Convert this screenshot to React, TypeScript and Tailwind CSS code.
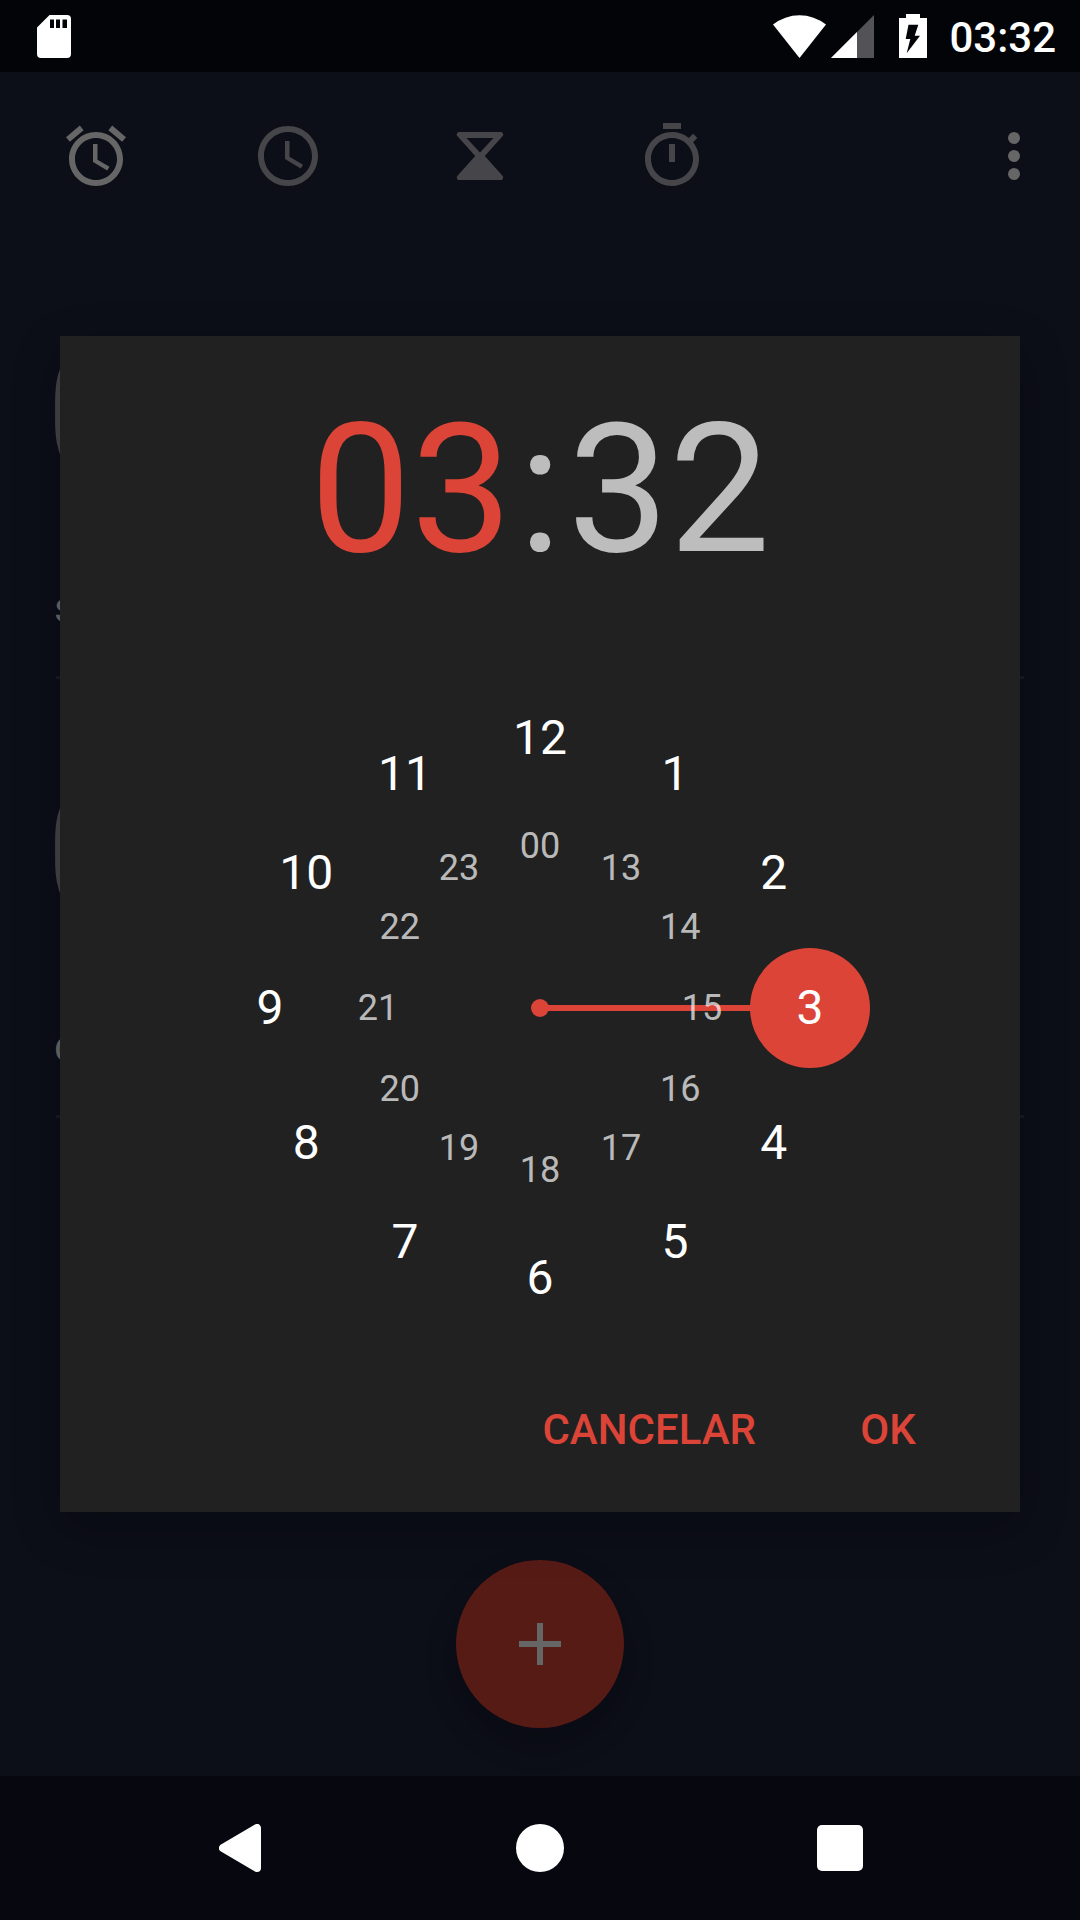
import { useState } from "react";
import type { ReactNode } from "react";

const TABS = [
  {
    label: "Alarme",
    path: "M22 5.72l-4.6-3.86-1.29 1.53 4.6 3.86L22 5.72zM7.88 3.39L6.6 1.86 2 5.71l1.29 1.53 4.59-3.85zM12.5 8H11v6l4.75 2.85.75-1.23-4-2.37V8zM12 4c-4.97 0-9 4.03-9 9s4.02 9 9 9c4.97 0 9-4.03 9-9s-4.03-9-9-9zm0 16c-3.87 0-7-3.13-7-7s3.13-7 7-7 7 3.13 7 7-3.13 7-7 7z",
  },
  {
    label: "Relógio",
    path: "M11.99 2C6.47 2 2 6.48 2 12s4.47 10 9.99 10C17.52 22 22 17.52 22 12S17.52 2 11.99 2zM12 20c-4.42 0-8-3.58-8-8s3.58-8 8-8 8 3.58 8 8-3.58 8-8 8zM12.5 7H11v6l5.25 3.15.75-1.23-4.5-2.67z",
  },
  {
    label: "Timer",
    path: "M5.2 4h13.6c.9 0 1.2.9.7 1.45L13.6 12l5.9 6.55c.5.55.2 1.45-.7 1.45H5.2c-.9 0-1.2-.9-.7-1.45L10.4 12 4.5 5.450C4 4.900 4.300 4 5.200 4zM7.500 6 12 10.800 16.500 6z",
  },
  {
    label: "Cronômetro",
    path: "M15 1H9v2h6V1zm-4 13h2V8h-2v6zm8.03-6.61l1.42-1.42c-.43-.51-.9-.99-1.41-1.41l-1.42 1.42A8.962 8.962 0 0 0 12 4c-4.97 0-9 4.03-9 9s4.02 9 9 9a8.994 8.994 0 0 0 7.03-14.61zM12 20c-3.87 0-7-3.13-7-7s3.13-7 7-7 7 3.13 7 7-3.13 7-7 7z",
  },
];

const OUTER = ["12", "1", "2", "3", "4", "5", "6", "7", "8", "9", "10", "11"];
const INNER = ["00", "13", "14", "15", "16", "17", "18", "19", "20", "21", "22", "23"];

// The dial is drawn in a 648-unit square.
const DIAL = 648;
const OUTER_RADIUS = 270;
const INNER_RADIUS = 162;

function dialPoint(index: number, radius: number) {
  const angle = (index * Math.PI) / 6;
  return {
    x: DIAL / 2 + radius * Math.sin(angle),
    y: DIAL / 2 - radius * Math.cos(angle),
  };
}

function StatusBar() {
  return (
    <header className="flex h-[72px] shrink-0 items-center justify-between bg-[#030408] pr-6 pl-[37px] text-white">
      <svg width="34" height="43" viewBox="0 0 34 43" aria-label="Cartão SD">
        <path
          fill="currentColor"
          fillRule="evenodd"
          d="M12.5 0H30a4 4 0 0 1 4 4v35a4 4 0 0 1-4 4H4a4 4 0 0 1-4-4V12.500zM13 4.500v8.500h4V4.500zM19 4.500v8.500h4V4.500zM25.500 4.500v8.500h4.500V4.500z"
        />
      </svg>
      <div className="flex items-center">
        <svg width="53" height="43" viewBox="0 0 53 43" aria-label="Wi-Fi">
          <path fill="currentColor" d="M26.5 43 0 9.500A43 43 0 0 1 53 9.500z" />
        </svg>
        <svg className="ml-[5px]" width="43" height="43" viewBox="0 0 43 43" aria-label="Sinal">
          <path fill="#535257" d="M43 0v43H0z" />
          <path fill="currentColor" d="M26 17v26H0z" />
        </svg>
        <svg className="ml-[25px]" width="28" height="44" viewBox="0 0 28 44" aria-label="Bateria carregando">
          <path
            fill="currentColor"
            fillRule="evenodd"
            d="M7 0h14v4h7v40H0V4h7zM9.500 10.700 6.700 25h4.600L7.700 39.300 21 21.700h-5.300l3.600-11z"
          />
        </svg>
        <time className="ml-[22px] pt-1 text-[42px] leading-[48px] font-medium">03:32</time>
      </div>
    </header>
  );
}

function Toolbar() {
  return (
    <nav className="flex h-[168px] shrink-0 items-center pr-[30px]">
      {TABS.map((tab, i) => (
        <button
          key={tab.label}
          type="button"
          aria-label={tab.label}
          className={`flex h-full w-48 items-center justify-center ${i === 0 ? "text-[#666666]" : "text-[#464549]"}`}
        >
          <svg className="size-[72px]" viewBox="0 0 24 24" fill="currentColor" fillRule="evenodd">
            <path d={tab.path} />
          </svg>
        </button>
      ))}
      <button type="button" aria-label="Mais opções" className="ml-auto text-[#666666]">
        <svg className="size-[72px]" viewBox="0 0 24 24" fill="currentColor">
          <circle cx="12" cy="6" r="2" />
          <circle cx="12" cy="12" r="2" />
          <circle cx="12" cy="18" r="2" />
        </svg>
      </button>
    </nav>
  );
}

function AlarmRow({ time, days }: { time: string; days: string }) {
  return (
    <li className="pt-[69px]">
      <p className="pl-[45px] text-[180px] leading-[211px] text-[#434347]">{time}</p>
      <p className="mt-16 pb-11 pl-[54px] text-[42px] leading-[48px] text-[#666666]">{days}</p>
      <div className="mx-14 h-[3px] bg-[#181a22]" />
    </li>
  );
}

function Dial({ hour, onSelect }: { hour: string; onSelect: (hour: string) => void }) {
  const onOuter = OUTER.includes(hour);
  const hand = dialPoint(
    onOuter ? OUTER.indexOf(hour) : INNER.indexOf(hour),
    onOuter ? OUTER_RADIUS : INNER_RADIUS,
  );
  const ring = (labels: string[], radius: number, style: string) =>
    labels.map((label, i) => {
      const p = dialPoint(i, radius);
      return (
        <button
          key={label}
          type="button"
          onClick={() => onSelect(label)}
          className={`absolute flex size-20 -translate-1/2 items-center justify-center ${style}`}
          style={{ left: `${(p.x / DIAL) * 100}%`, top: `${(p.y / DIAL) * 100}%` }}
        >
          {label}
        </button>
      );
    });
  return (
    <div className="relative mx-auto mt-[89px] aspect-square w-full max-w-[648px]">
      <svg className="size-full overflow-visible text-[#db4437]" viewBox="0 0 648 648" fill="currentColor">
        <circle cx={DIAL / 2} cy={DIAL / 2} r="9" />
        <line x1={DIAL / 2} y1={DIAL / 2} x2={hand.x} y2={hand.y} stroke="currentColor" strokeWidth="6" />
        <circle cx={hand.x} cy={hand.y} r="60" />
      </svg>
      {ring(OUTER, OUTER_RADIUS, "text-[48px] leading-[56px] text-white")}
      {ring(INNER, INNER_RADIUS, "text-[36px] leading-[42px] text-white/70")}
    </div>
  );
}

function TimePicker() {
  const [hour, setHour] = useState("3");
  return (
    <div className="absolute inset-0 flex items-center justify-center px-[60px]">
      <section
        role="dialog"
        aria-label="Definir horário"
        className="flex w-full max-w-[960px] flex-col bg-[#212121] pt-12 pb-2.5 shadow-[0_16px_48px_rgba(0,0,0,0.2)]"
      >
        <div className="flex justify-center text-[180px] leading-[211px] text-[#bdbdbd]">
          <button type="button" className="text-[#db4437]">
            {hour.padStart(2, "0")}
          </button>
          <span className="mx-1.5">:</span>
          <button type="button">32</button>
        </div>
        <Dial hour={hour} onSelect={setHour} />
        <div className="mt-[26px] flex justify-end pr-9 text-[42px] leading-[48px] font-medium text-[#db4437]">
          <button type="button" className="h-36 px-9">
            CANCELAR
          </button>
          <button type="button" className="h-36 min-w-48 px-9">
            OK
          </button>
        </div>
      </section>
    </div>
  );
}

function NavButton({ label, children }: { label: string; children: ReactNode }) {
  return (
    <button type="button" aria-label={label} className="flex h-full flex-1 items-center justify-center">
      {children}
    </button>
  );
}

function NavigationBar() {
  return (
    <footer className="flex h-36 shrink-0 items-center bg-[#06070f] px-[90px] text-white">
      <NavButton label="Voltar">
        <svg width="42" height="48" viewBox="0 0 42 48">
          <path
            d="M4 24 38 4v40z"
            fill="currentColor"
            stroke="currentColor"
            strokeWidth="8"
            strokeLinejoin="round"
          />
        </svg>
      </NavButton>
      <NavButton label="Início">
        <span className="size-12 rounded-full bg-white" />
      </NavButton>
      <NavButton label="Recentes">
        <span className="size-[46px] rounded-[5px] bg-white" />
      </NavButton>
    </footer>
  );
}

export default function App() {
  return (
    <div className="flex min-h-screen flex-col bg-[#0c0e18] font-[Roboto,sans-serif]">
      <StatusBar />
      <main className="relative flex flex-1 flex-col">
        <Toolbar />
        <ul>
          <AlarmRow time="0" days="s" />
          <AlarmRow time="0" days="d" />
        </ul>
        <button
          type="button"
          aria-label="Adicionar alarme"
          className="mx-auto mt-auto mb-12 flex size-[168px] items-center justify-center rounded-full bg-[#571b16] text-[#666666] shadow-[0_16px_32px_rgba(0,0,0,0.2)]"
        >
          <svg className="size-[72px]" viewBox="0 0 24 24" fill="currentColor">
            <path d="M19 13h-6v6h-2v-6H5v-2h6V5h2v6h6z" />
          </svg>
        </button>
        <TimePicker />
      </main>
      <NavigationBar />
    </div>
  );
}
